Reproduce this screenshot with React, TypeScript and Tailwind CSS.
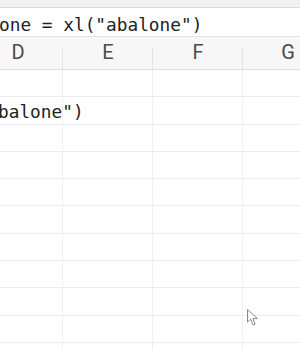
import React from "react";

const columns = ["D", "E", "F", "G"];
const rowCount = 11;

const Cursor: React.FC = () => (
  <svg
    className="absolute left-[247px] top-[309px]"
    width="13"
    height="18"
    viewBox="0 0 13 18"
  >
    <path
      d="M0.5 0.5 L0.5 13 L3.6 10.2 L6 16 L8.2 15 L5.9 9.6 L10.4 9.6 Z"
      fill="#ffffff"
      stroke="#8a8a8a"
      strokeWidth="1"
      strokeLinejoin="round"
    />
  </svg>
);

const App: React.FC = () => {
  return (
    <div className="relative w-[300px] h-[350px] overflow-hidden bg-white">
      {/* toolbar edge */}
      <div className="h-[8px] bg-[#f1f1f1] border-b border-[#dcdcdc]" />

      {/* formula bar */}
      <div className="h-[29px] flex items-center overflow-hidden border-b border-[#e2e2e2] bg-white">
        <span
          className="ml-[-1px] whitespace-nowrap text-[17.8px] leading-none text-[#222] pt-[5px]"
          style={{ fontFamily: '"DejaVu Sans Mono", monospace' }}
        >
          one = xl("abalone")
        </span>
      </div>

      {/* column headers */}
      <div className="h-[33px] flex ml-[-27px] bg-[#f7f7f7] border-b border-[#dedede]">
        {columns.map((c) => (
          <div
            key={c}
            className="w-[90px] shrink-0 flex items-end justify-center relative"
          >
            <span
              className="pb-[2px] text-[20px] text-[#4a4a4a]"
              style={{ fontFamily: "Roboto, sans-serif" }}
            >
              {c}
            </span>
            <div className="absolute right-0 bottom-0 h-[22px] w-px bg-[#e3e3e3]" />
          </div>
        ))}
      </div>

      {/* grid */}
      <div className="flex flex-col">
        {Array.from({ length: rowCount }).map((_, r) => (
          <div
            key={r}
            className="h-[27.3px] flex ml-[-27px] border-b border-[#ececec] relative"
          >
            {columns.map((c) => (
              <div
                key={c}
                className="w-[90px] shrink-0 border-r border-[#f0f0f0]"
              />
            ))}
            {r === 1 && (
              <div className="absolute left-0 top-0 h-full w-[120px] overflow-hidden flex items-center">
                <span
                  className="ml-[25px] whitespace-nowrap text-[17.8px] leading-none text-[#222] pt-[3px]"
                  style={{ fontFamily: '"DejaVu Sans Mono", monospace' }}
                >
                  balone")
                </span>
              </div>
            )}
          </div>
        ))}
      </div>

      <Cursor />
    </div>
  );
};

export default App;
